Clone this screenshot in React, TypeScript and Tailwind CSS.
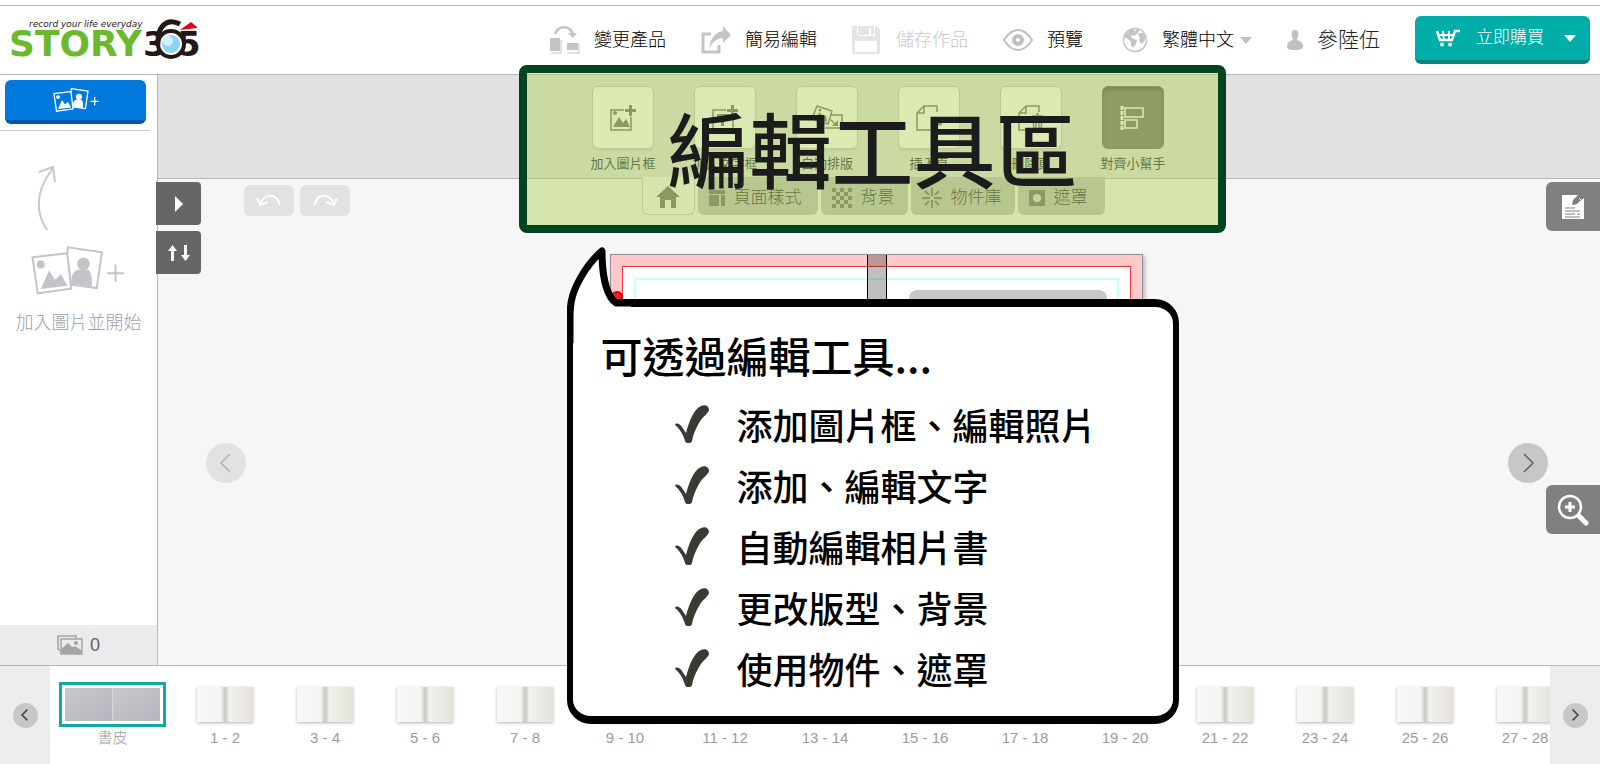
import type { ReactNode } from "react";

const navItems = [
  { label: "變更產品", icon: <SwapIcon />, disabled: false },
  { label: "簡易編輯", icon: <ShareIcon />, disabled: false },
  { label: "儲存作品", icon: <SaveIcon />, disabled: true },
  { label: "預覽", icon: <EyeIcon />, disabled: false },
];

const tools = [
  { label: "加入圖片框", icon: <AddImageIcon /> },
  { label: "加入文字框", icon: <AddTextIcon /> },
  { label: "自動排版", icon: <AutoLayoutIcon /> },
  { label: "插入頁", icon: <InsertPageIcon /> },
  { label: "刪除頁", icon: <DeletePageIcon /> },
  { label: "對齊小幫手", icon: <AlignIcon />, active: true },
];

const tabs = [
  { label: "頁面樣式", icon: <LayoutIcon />, width: "w-[120px]" },
  { label: "背景", icon: <CheckerIcon />, width: "w-[87px]" },
  { label: "物件庫", icon: <BurstIcon />, width: "w-[104px]" },
  { label: "遮罩", icon: <MaskIcon />, width: "w-[87px]" },
];

const features = [
  "添加圖片框、編輯照片",
  "添加、編輯文字",
  "自動編輯相片書",
  "更改版型、背景",
  "使用物件、遮罩",
];

const spreads = Array.from({ length: 14 }, (_, i) => `${i * 2 + 1} - ${i * 2 + 2}`);

function SwapIcon() {
  return (
    <svg width="30" height="30" viewBox="0 0 30 30" fill="#c4c4c4">
      <path d="M5 9C8 0 20 0 23 9" fill="none" stroke="#c4c4c4" strokeWidth="2.5" />
      <path d="M18 8h9l-4 5z" />
      <path d="M0 13h10v13H0zM17 18h11v7H17z" />
      <path d="M1 28h10V15M17 28h12v-9" fill="none" stroke="#c4c4c4" />
    </svg>
  );
}

function ShareIcon() {
  return (
    <svg width="30" height="30" viewBox="0 0 30 30" fill="#c4c4c4">
      <path d="M10 9H2v18h16v-7" fill="none" stroke="#c4c4c4" strokeWidth="3" />
      <path d="M8 24C9 14 14 7 22 6V1l8 9-8 8v-5c-7 0-11 5-14 11z" />
    </svg>
  );
}

function SaveIcon() {
  return (
    <svg width="30" height="30" viewBox="0 0 30 30">
      <path d="M0 3a2 2 0 0 1 2-2h22l4 4v22a2 2 0 0 1-2 2H2a2 2 0 0 1-2-2z" fill="#e4e4e4" />
      <path d="M5 1h1v10h17V1h-1v9H5zM3 16h22v11H3z" fill="#fff" />
      <path d="M17 3h2v8h-2z" fill="#fff" />
    </svg>
  );
}

function EyeIcon() {
  return (
    <svg width="30" height="30" viewBox="0 0 30 30" fill="none" stroke="#c0c0c0">
      <path d="M1 15C6 7 10 5 15 5s9 2 14 10c-5 8-9 10-14 10S6 23 1 15z" strokeWidth="2" />
      <circle cx="15" cy="15" r="4" strokeWidth="4" />
    </svg>
  );
}

function GlobeIcon() {
  return (
    <svg width="30" height="30" viewBox="0 0 30 30">
      <circle cx="17" cy="15" r="11.5" fill="#fff" stroke="#c4c4c4" strokeWidth="1.5" />
      <path
        d="M9 8c2-3 4-4 7-4l1 2 3-2 2 1-3 4-3 2-2-1-1 2 3 2 3 1-1 4-3 4-2-3v-3l-3-3-4-2zM21 8l4 0 2 3 0 4-2 3-2 1-2-4 1-3-2-1z"
        fill="#c4c4c4"
      />
    </svg>
  );
}

function UserIcon() {
  return (
    <svg width="16" height="22" viewBox="0 0 16 22" fill="#c0c0c0">
      <path d="M8 1c3 0 4 3 3 6l-1 4c4 1 6 3 6 7 0 2-2 3-8 3s-8-1-8-3c0-4 2-6 6-7L5 7C4 4 5 1 8 1z" />
    </svg>
  );
}

function CartIcon() {
  return (
    <svg width="26" height="18" viewBox="0 0 26 18" fill="none" stroke="#fff">
      <path d="M25 2h-5l-3 9H5L2 2" strokeWidth="2.5" />
      <path d="M3 6h16M8 2l1 9M14 2v9" strokeWidth="2" />
      <circle cx="7" cy="15.5" r="2" fill="#fff" stroke="none" />
      <circle cx="15" cy="15.5" r="2" fill="#fff" stroke="none" />
    </svg>
  );
}

function PhotosIcon({ className, weight }: { className: string; weight: number }) {
  return (
    <svg className={className} viewBox="0 0 280 148" fill="currentColor">
      <path
        d="M109 22L4 34l16 109 101-14zM109 22L111 4l103 15-16 108-78-10z"
        fill="none"
        stroke="currentColor"
        strokeWidth={weight}
      />
      <circle cx="29" cy="56" r="12" />
      <path d="M29 130l25-56 18 28 18-17 20 35z" />
      <circle cx="158" cy="54" r="19" />
      <path d="M121 114c-2-28 10-43 26-43h20c14 0 18 20 16 51z" />
      <path d="M230 82h50M255 56v52" stroke="currentColor" strokeWidth={weight} />
    </svg>
  );
}

function AddImageIcon() {
  return (
    <svg width="26" height="26" viewBox="0 0 26 26" fill="#666">
      <path d="M14 5H1v20h20V12" fill="none" stroke="#666" strokeWidth="1.5" />
      <path d="M19 0h3v4h4v3h-4v4h-3V7h-4V4h4zM3 22l6-10 4 6 3-4 4 8z" />
      <circle cx="5" cy="8" r="2" />
    </svg>
  );
}

function AddTextIcon() {
  return (
    <svg width="26" height="26" viewBox="0 0 26 26" fill="#666">
      <path d="M14 5H1v20h20V12" fill="none" stroke="#666" strokeWidth="1.5" />
      <path d="M19 0h3v4h4v3h-4v4h-3V7h-4V4h4zM5 9h12v4h-2v-1h-3v9H9v-9H7v1H5z" />
    </svg>
  );
}

function AutoLayoutIcon() {
  return (
    <svg width="32" height="26" viewBox="0 0 32 26" fill="#666">
      <path d="M6 1l15 5-4 13L1 14zM20 10h11v13H14" fill="none" stroke="#666" strokeWidth="1.5" />
      <path d="M4 13l5-6 3 5 3-2 1 7zM27 21h-6l2-2-4-4 1-1 4 4 3-3z" />
      <circle cx="9" cy="5" r="1.5" />
    </svg>
  );
}

function InsertPageIcon() {
  return (
    <svg width="26" height="26" viewBox="0 0 26 26" fill="none" stroke="#666" strokeWidth="1.5">
      <path d="M21 7V1H8L1 8v17h14M8 1v7H1" />
      <path d="M21 14v10M16 19h10" strokeWidth="2.5" />
    </svg>
  );
}

function DeletePageIcon() {
  return (
    <svg width="26" height="26" viewBox="0 0 26 26" fill="none" stroke="#666" strokeWidth="1.5">
      <path d="M21 7V1H8L1 8v17h11M8 1v7H1M14 11h11M18 9h3M15 13l1 12h7l1-12M18 13v10M21 13v10" />
    </svg>
  );
}

function AlignIcon() {
  return (
    <svg width="26" height="26" viewBox="0 0 26 26" fill="none" stroke="#fff" strokeWidth="1.5">
      <path d="M2 1v24" strokeWidth="3" strokeDasharray="4 1" />
      <path d="M5 3h18v9H5zM5 15h12v8H5z" />
    </svg>
  );
}

function HomeIcon() {
  return (
    <svg width="24" height="22" viewBox="0 0 24 22" fill="#666">
      <path d="M12 0l12 11h-4v11h-5v-8H9v8H4V11H0z" />
    </svg>
  );
}

function LayoutIcon() {
  return (
    <svg width="16" height="16" viewBox="0 0 16 16" fill="#666">
      <path d="M0 0h16v4H0zM0 5h10v11H0zM12 5h4v11h-4z" />
    </svg>
  );
}

function CheckerIcon() {
  return (
    <svg width="20" height="20" viewBox="0 0 20 20" fill="#666">
      <path d="M0 0h4v4H0zM8 0h4v4H8zM16 0h4v4h-4zM4 4h4v4H4zM12 4h4v4h-4zM0 8h4v4H0zM8 8h4v4H8zM16 8h4v4h-4zM4 12h4v4H4zM12 12h4v4h-4zM0 16h4v4H0zM8 16h4v4H8zM16 16h4v4h-4z" />
    </svg>
  );
}

function BurstIcon() {
  return (
    <svg width="20" height="20" viewBox="0 0 20 20" stroke="#666" strokeWidth="2">
      <path d="M10 0v8M10 12v8M0 10h8M12 10h8M3 3l4 4M17 3l-4 4M3 17l4-4M17 17l-4-4" />
    </svg>
  );
}

function MaskIcon() {
  return (
    <svg width="16" height="16" viewBox="0 0 16 16">
      <path d="M0 0h16v16H0z" fill="#666" />
      <circle cx="8" cy="8" r="4" fill="#d8d8d8" />
    </svg>
  );
}

function UndoIcon({ className }: { className?: string }) {
  return (
    <svg className={className} width="26" height="14" viewBox="0 0 26 14" fill="none" stroke="#fff" strokeWidth="2">
      <path d="M4 10C8 0 20-2 24 11M1 4l3 7 8-3" />
    </svg>
  );
}

function ChevronIcon({ className, size }: { className?: string; size: number }) {
  return (
    <svg className={className} width={size} height={size} viewBox="0 0 20 20" fill="none" stroke="currentColor" strokeWidth={size < 16 ? 2.5 : 1.5}>
      <path d="M6 1l9 9-9 9" />
    </svg>
  );
}

function CheckIcon() {
  return (
    <svg width="34" height="38" viewBox="0 0 34 38" fill="#3a3a35">
      <path d="M0 20c1-3 5-1 7 2l4 6C14 17 18 5 26 1c4-2 8 0 8 4-1 4-6 6-10 13-4 7-6 12-7 18-1 3-6 3-7 0C8 29 5 24 0 20z" />
    </svg>
  );
}

function Logo() {
  return (
    <a href="#" className="relative block h-[44px] w-[192px] font-['DejaVu_Sans']">
      <span className="absolute left-5 top-0 whitespace-nowrap text-[9px] italic leading-[12px] text-[#2a2020]">
        record your life everyday
      </span>
      <span className="absolute left-0 top-[12px] text-[36px] font-bold leading-[28px] text-[#6cb92d]">STORY</span>
      <svg className="absolute left-[134px] top-0" width="62" height="44" viewBox="0 0 62 44">
        <g fill="#231815" fontSize="34" fontWeight="700">
          <text x="0" y="38">3</text>
          <text x="34" y="38">5</text>
        </g>
        <circle cx="28" cy="26" r="13" fill="#fff" stroke="#231815" strokeWidth="4" />
        <path d="M15 27C14 9 23-1 37 6" fill="none" stroke="#231815" strokeWidth="5" />
        <circle cx="28" cy="26" r="9" fill="#8fd3f5" />
        <circle cx="25" cy="23" r="5" fill="#d5f0fd" />
        <path d="M37 12l11-8 6 5v1z" fill="#e60012" />
      </svg>
    </a>
  );
}

function Book() {
  return (
    <span className="flex h-[35px] w-[56px] shadow-[0_1px_3px_rgba(0,0,0,0.3)]">
      <span className="flex-1 bg-linear-to-r from-[#f8f8f6] via-[#f4f4f2] via-85% to-[#c8c8c4]" />
      <span className="flex-1 bg-linear-to-r from-[#c4c4c0] via-[#f2f2ee] via-15% to-[#e4e2da]" />
    </span>
  );
}

function RoundButton({ label, className, children }: { label: string; className: string; children: ReactNode }) {
  return (
    <button aria-label={label} className={`flex items-center justify-center rounded-full ${className}`}>
      {children}
    </button>
  );
}

export default function App() {
  return (
    <div className="flex h-screen min-h-[764px] flex-col overflow-hidden bg-white pt-[5px] font-['Liberation_Sans','Noto_Sans_CJK_TC',sans-serif]">
      <header className="flex h-[70px] flex-none items-center justify-between border-y border-[#b8b8b8] pl-[9px] pr-[10px]">
        <Logo />
        <nav className="flex items-center gap-[35px] whitespace-nowrap text-[18px] font-light text-black">
          {navItems.map((item) => (
            <button key={item.label} disabled={item.disabled} className="flex items-center gap-[14px] disabled:text-[#c8c8c8]">
              {item.icon}
              {item.label}
            </button>
          ))}
          <label className="flex items-center gap-[14px]">
            <GlobeIcon />
            <span className="flex w-[90px] items-center">
              <select aria-label="語言" className="w-[78px] flex-none appearance-none bg-transparent">
                <option>繁體中文</option>
              </select>
              <svg width="12" height="7" viewBox="0 0 12 7" fill="#c0c0c0">
                <path d="M0 0h12L6 7z" />
              </svg>
            </span>
          </label>
          <button className="flex items-center gap-[14px] text-[21px] text-[#222]">
            <UserIcon />
            參陸伍
          </button>
          <button className="flex h-[48px] w-[175px] items-center rounded-md border-b-4 border-[#06827e] bg-[#00aea9] pl-5 pr-[14px] text-[17px] text-white">
            <CartIcon />
            <span className="ml-[15px]">立即購買</span>
            <svg className="ml-auto" width="12" height="7" viewBox="0 0 12 7" fill="#fff">
              <path d="M0 0h12L6 7z" />
            </svg>
          </button>
        </nav>
      </header>

      <div className="flex min-h-0 flex-1">
        <aside className="flex w-[158px] flex-none flex-col border-r border-[#b8b8b8]">
          <button
            aria-label="加入圖片"
            className="mx-[5px] mt-[5px] flex h-[44px] w-[141px] items-center justify-center rounded-md border-b-4 border-[#0059a6] bg-[#0078dc] text-white"
          >
            <PhotosIcon className="h-6 w-[46px]" weight={8} />
          </button>
          <div className="mr-[7px] mt-[6px] border-t border-[#ccc]" />
          <svg className="ml-[36px] mt-[35px]" width="22" height="66" viewBox="0 0 22 66" fill="none" stroke="#c8c8ca" strokeWidth="2">
            <path d="M11 64C-2 44 0 24 17 2M3 6l14-5 2 15" />
          </svg>
          <PhotosIcon className="ml-[31px] mt-[14px] h-[49px] w-[93px] text-[#c3c3c8]" weight={6} />
          <p className="mt-4 text-center text-[18px] font-light leading-6 text-[#a0a0ac]">加入圖片並開始</p>
          <div className="mt-auto flex h-10 items-center justify-center gap-[7px] bg-[#ebebed] text-[18px] text-[#606060]">
            <svg width="26" height="21" viewBox="0 0 26 21" fill="none" stroke="#a4a4a4" strokeWidth="1.5">
              <path d="M4 16L1 14V1h18v3M4 4h21v15H4z" />
              <circle cx="19" cy="8" r="2" fill="#a4a4a4" stroke="none" />
              <path d="M5 18v-4l6-5 4 4 3-1 6 4v2z" fill="#a4a4a4" />
            </svg>
            0
          </div>
        </aside>

        <main className="relative flex min-w-0 flex-1 flex-col">
          <div className="flex h-[104px] flex-none justify-center gap-10 border-b border-[#b8b8b8] bg-[#e1e1e1] pr-[2px] pt-[11px]">
            {tools.map((tool) => (
              <button key={tool.label} className="flex w-[62px] flex-col items-center">
                <span
                  className={`flex h-[63px] w-[62px] flex-none items-center justify-center rounded-md border ${
                    tool.active
                      ? "border-[#606060] bg-[#6b6b6b] shadow-[inset_0_3px_3px_rgba(0,0,0,0.3)]"
                      : "border-[#c4c4c4] bg-white shadow-[0_2px_2px_rgba(0,0,0,0.08)]"
                  }`}
                >
                  {tool.icon}
                </span>
                <span className="mt-[5px] whitespace-nowrap text-[13px] leading-5 text-[#222]">{tool.label}</span>
              </button>
            ))}
          </div>

          <div className="relative min-h-0 flex-1 bg-[#f6f6f6]">
            <div className="grid grid-cols-[1fr_auto_1fr] pr-3">
              <div className="ml-[86px] mt-[6px] flex h-[31px] gap-[6px]">
                <button aria-label="復原" className="flex w-[50px] items-center justify-center rounded-md bg-[#e2e2e2]">
                  <UndoIcon />
                </button>
                <button aria-label="重做" className="flex w-[50px] items-center justify-center rounded-md bg-[#e2e2e2]">
                  <UndoIcon className="-scale-x-100" />
                </button>
              </div>
              <div className="-mt-[2px] flex h-[38px] gap-[3px]">
                <button aria-label="首頁" className="flex w-[53px] items-center justify-center rounded-b-md border border-t-0 border-[#c4c4c4] bg-[#f6f6f6] pt-[3px]">
                  <HomeIcon />
                </button>
                {tabs.map((tab) => (
                  <button
                    key={tab.label}
                    className={`flex items-center gap-[9px] whitespace-nowrap rounded-b-md bg-[#bcbcbc] pl-[11px] pt-[3px] text-[17px] font-light text-[#222] ${tab.width}`}
                  >
                    {tab.icon}
                    {tab.label}
                  </button>
                ))}
              </div>
            </div>

            {/* cover spread with bleed, trim and safe-area guides */}
            <div className="mt-[38px] flex justify-center pr-[6px]">
              <div className="relative h-[370px] w-[533px] border border-[#909098] bg-[#ffc9c9] p-[11px] shadow-[2px_2px_4px_rgba(0,0,0,0.25)]">
                <div className="h-full border border-[#e8383d] bg-white p-[11px]">
                  <div className="h-full border-2 border-[#c4ffff]" />
                </div>
                <div className="absolute inset-y-0 left-[256px] w-[20px] border-x border-black bg-black/25" />
                <div className="absolute left-[298px] top-[35px] h-[60px] w-[198px] rounded-lg bg-[#c8c8c8]" />
                <div className="absolute left-0 top-[36px] h-3 w-3 rounded-full border-2 border-[#d40010] bg-[#f02030]" />
              </div>
            </div>

            <div className="absolute -left-[2px] top-[3px] flex flex-col gap-[6px]">
              <button aria-label="展開" className="flex h-[43px] w-[45px] items-center justify-center rounded-r bg-[#666]">
                <svg width="8" height="16" viewBox="0 0 8 16" fill="#fff">
                  <path d="M0 0l8 8-8 8z" />
                </svg>
              </button>
              <button aria-label="排序" className="flex h-[43px] w-[45px] items-center justify-center rounded-r bg-[#666]">
                <svg width="22" height="16" viewBox="0 0 22 16" fill="#fff">
                  <path d="M4.500 0l4.500 6H6v10H3V6H0zM16 0h3v10h3l-4.500 6-4.500-6h3z" />
                </svg>
              </button>
            </div>
            <button aria-label="備註" className="absolute right-0 top-[3px] flex h-[49px] w-[54px] items-center justify-center rounded-l-md bg-[#808080]">
              <svg width="22" height="24" viewBox="0 0 22 24">
                <path d="M0 0h16l-5 5-1 5 4-1 8-6v21H0z" fill="#fff" />
                <path d="M12 7l6-7 3 3-6 6-4 1z" fill="#808080" />
                <path d="M17 3l2 2" stroke="#fff" />
                <path d="M3 13h10M3 16h15M3 19h10M15 19h3M3 22h15" stroke="#808080" strokeWidth="1" />
              </svg>
            </button>
            <button aria-label="放大" className="absolute right-0 top-[306px] flex h-[49px] w-[54px] items-center justify-center rounded-l-md bg-[#808080]">
              <svg width="32" height="32" viewBox="0 0 32 32" fill="none" stroke="#fff" strokeWidth="3">
                <circle cx="13" cy="13" r="11" strokeWidth="2.5" />
                <path d="M13 8v10M8 13h10" />
                <path d="M22 22l7 7" strokeWidth="5" strokeLinecap="round" />
              </svg>
            </button>
            <RoundButton label="上一頁" className="absolute left-12 top-[264px] h-10 w-10 bg-[#e2e2e2] text-[#b0b0b0]">
              <ChevronIcon size={20} className="-scale-x-100" />
            </RoundButton>
            <RoundButton label="下一頁" className="absolute right-[52px] top-[264px] h-10 w-10 bg-[#c7c7c7] text-[#606060]">
              <ChevronIcon size={20} />
            </RoundButton>
          </div>

          {/* guided tour layer */}
          <div className="absolute inset-x-0 -top-[10px] z-20 flex flex-col items-center pr-[13px] font-['Noto_Sans_CJK_TC',sans-serif] font-medium">
            <div className="flex h-[168px] w-[707px] items-center justify-center rounded-lg border-8 border-[#004420] bg-[#b3d460]/48 pb-1">
              <h1 className="whitespace-nowrap text-[82px] leading-[100px] text-[#1c1c1c]">編輯工具區</h1>
            </div>
            <section className="relative mt-[66px] h-[425px] w-[612px] rounded-[24px] border-x-[6px] border-y-8 border-black bg-white pl-[28px] pt-[18px] text-black">
              <svg className="absolute -left-[6px] -top-[60px]" width="64" height="96" viewBox="0 0 64 96">
                <path d="M3 96V70C3 54 6 44 14 30 22 16 28 10 35 4c0 20 3 44 14 51h15v20L20 96z" fill="#fff" />
                <path
                  d="M3 96V70C3 54 6 44 14 30 22 16 28 10 35 4c0 20 3 44 14 52h15"
                  fill="none"
                  stroke="#000"
                  strokeWidth="7"
                  strokeLinejoin="round"
                />
              </svg>
              <h2 className="text-[42px] leading-[60px]">可透過編輯工具...</h2>
              <ul className="pl-[74px] pt-2">
                {features.map((feature) => (
                  <li key={feature} className="flex h-[61px] items-center gap-7 text-[36px] leading-[60px]">
                    <CheckIcon />
                    {feature}
                  </li>
                ))}
              </ul>
            </section>
          </div>
        </main>
      </div>

      <footer className="flex h-[99px] flex-none border-t border-[#b8b8b8] text-[15px] text-[#9a9aa4]">
        <div className="flex w-[50px] flex-none items-center justify-center bg-[#ededed]">
          <RoundButton label="往前" className="h-[25px] w-[25px] bg-[#c7c7c7] text-[#444]">
            <ChevronIcon size={12} className="-scale-x-100" />
          </RoundButton>
        </div>
        <div className="flex min-w-0 flex-1 overflow-hidden pt-4">
          <button className="flex w-[125px] flex-none flex-col items-center font-light">
            <span className="flex h-[45px] w-[107px] border-[3px] border-[#12a8a2] p-[3px]">
              <span className="flex-1 border-r border-[#d8d8dc] bg-linear-to-br from-[#c8c8ce] to-[#b6b6be]" />
              <span className="flex-1 bg-linear-to-br from-[#c8c8ce] to-[#b6b6be]" />
            </span>
            <span className="leading-[22px]">書皮</span>
          </button>
          {spreads.map((pages) => (
            <button key={pages} className="flex w-[100px] flex-none flex-col items-center">
              <span className="flex h-[45px] items-center">
                <Book />
              </span>
              <span className="whitespace-nowrap leading-[22px]">{pages}</span>
            </button>
          ))}
        </div>
        <div className="flex w-[50px] flex-none items-center justify-center bg-[#ededed]">
          <RoundButton label="往後" className="h-[25px] w-[25px] bg-[#c7c7c7] text-[#444]">
            <ChevronIcon size={12} />
          </RoundButton>
        </div>
      </footer>
    </div>
  );
}
